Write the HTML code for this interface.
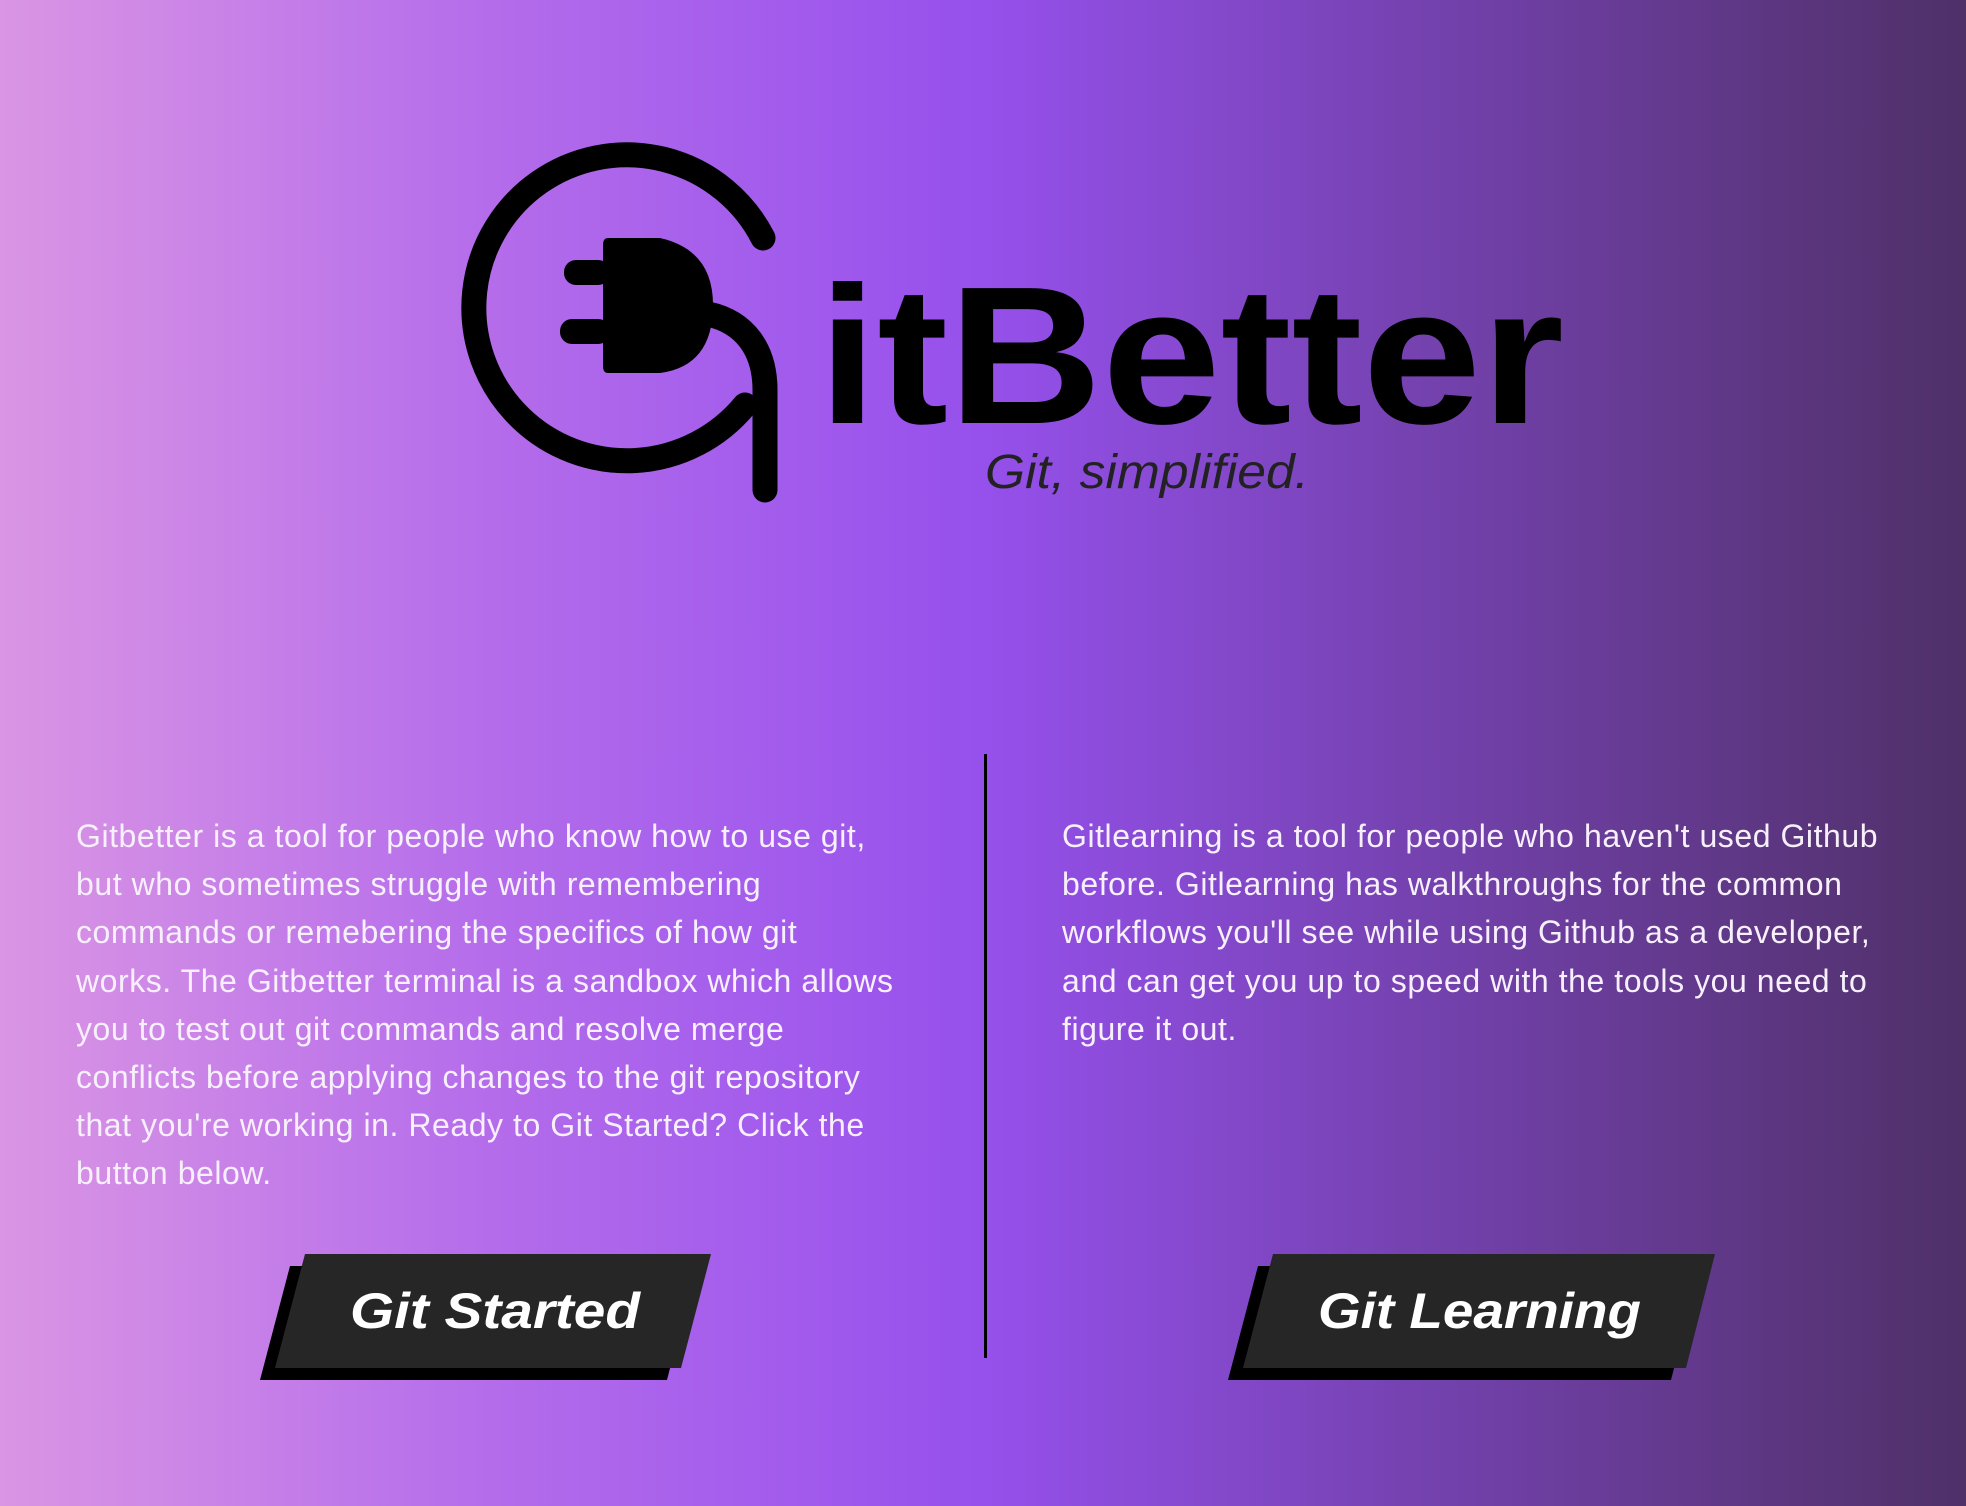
<!DOCTYPE html>
<html><head><meta charset="utf-8"><style>
html,body{margin:0;padding:0}
body{width:1966px;height:1506px;overflow:hidden;position:relative;
background:linear-gradient(90deg,#da95e4 0%,#b46ceb 25%,#9650ec 50%,#7542b0 72%,#4f3068 100%);
font-family:"Liberation Sans",sans-serif}
.p{position:absolute;top:812px;font-size:32px;letter-spacing:0.55px;line-height:48.2px;color:#f7f0fc;white-space:nowrap}
svg{position:absolute;left:0;top:0}
</style></head><body>
<svg width="1966" height="1506" viewBox="0 0 1966 1506">
 <g fill="none" stroke="#000" stroke-width="25" stroke-linecap="round">
  <path d="M763 238 A153 153 0 1 0 745 405"/>
  <path d="M708 314 C745 322 765 350 765 390 L765 490"/>
 </g>
 <path d="M608 238 L660 238 Q713 250 713 305 Q713 366 660 373 L608 373 Q603 373 603 366 L603 245 Q603 238 608 238 Z" fill="#000"/>
 <rect x="564" y="260" width="46" height="25" rx="12" fill="#000"/>
 <rect x="560" y="319" width="50" height="25" rx="12" fill="#000"/>
 <text x="818" y="423" font-size="196" font-weight="bold" fill="#000" textLength="746" lengthAdjust="spacingAndGlyphs">itBetter</text>
 <text x="985" y="488" font-size="48" font-style="italic" fill="#222" textLength="324" lengthAdjust="spacingAndGlyphs">Git, simplified.</text>
 <rect x="984" y="754" width="3" height="604" fill="#000"/>
 <polygon points="290,1266 696,1266 667,1380 260,1380" fill="#000"/>
 <polygon points="305,1254 711,1254 681,1368 275,1368" fill="#262626"/>
 <text x="350" y="1328" font-size="50" font-weight="bold" font-style="italic" fill="#fff" textLength="290" lengthAdjust="spacingAndGlyphs">Git Started</text>
 <polygon points="1258,1266 1700,1266 1671,1380 1228,1380" fill="#000"/>
 <polygon points="1273,1254 1715,1254 1686,1368 1243,1368" fill="#262626"/>
 <text x="1318" y="1328" font-size="50" font-weight="bold" font-style="italic" fill="#fff" textLength="323" lengthAdjust="spacingAndGlyphs">Git Learning</text>
</svg>
<div class="p" style="left:76px">Gitbetter is a tool for people who know how to use git,<br>but who sometimes struggle with remembering<br>commands or remebering the specifics of how git<br>works. The Gitbetter terminal is a sandbox which allows<br>you to test out git commands and resolve merge<br>conflicts before applying changes to the git repository<br>that you're working in. Ready to Git Started? Click the<br>button below.</div>
<div class="p" style="left:1062px">Gitlearning is a tool for people who haven't used Github<br>before. Gitlearning has walkthroughs for the common<br>workflows you'll see while using Github as a developer,<br>and can get you up to speed with the tools you need to<br>figure it out.</div>
</body></html>
